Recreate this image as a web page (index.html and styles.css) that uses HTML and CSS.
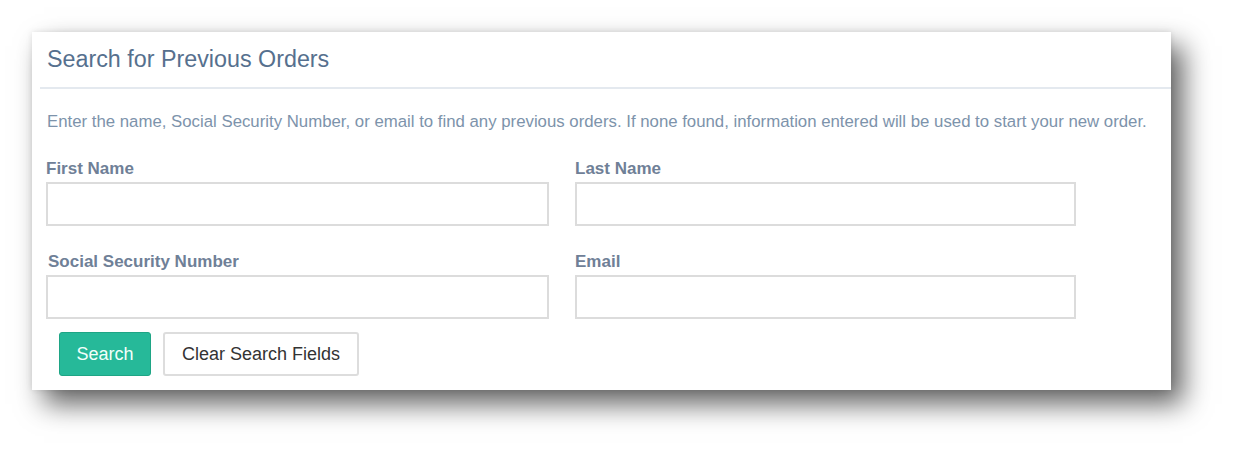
FILE: index.html
```html
<!DOCTYPE html>
<html lang="en">
<head>
  <meta charset="UTF-8">
  <title>Search for Previous Orders</title>
  <link rel="stylesheet" href="styles.css">
</head>
<body>
  <div class="panel">
    <div class="panel-header">
      <h2 class="panel-title">Search for Previous Orders</h2>
    </div>
    <div class="panel-body">
      <p class="hint">Enter the name, Social Security Number, or email to find any previous orders. If none found, information entered will be used to start your new order.</p>
      <div class="fields">
        <div class="field">
          <label for="first-name">First Name</label>
          <input type="text" id="first-name">
        </div>
        <div class="field">
          <label for="last-name">Last Name</label>
          <input type="text" id="last-name">
        </div>
        <div class="field">
          <label for="ssn" class="ssn-label">Social Security Number</label>
          <input type="text" id="ssn">
        </div>
        <div class="field">
          <label for="email">Email</label>
          <input type="text" id="email">
        </div>
      </div>
      <div class="actions">
        <button class="btn btn-search">Search</button>
        <button class="btn btn-clear">Clear Search Fields</button>
      </div>
    </div>
  </div>
</body>
</html>
```
FILE: styles.css
```css
html {
  background-color: #fff;
}
body {
  margin: 0;
  padding: 32px 0 65px 32px;
  background-color: #fff;
  font-family: 'Liberation Sans', Arial, sans-serif;
}
.panel {
  width: 1139px;
  height: 358px;
  box-sizing: border-box;
  background-color: #fff;
  box-shadow: 12px 14px 26px rgba(0, 0, 0, 0.62), 0 0 6px rgba(0, 0, 0, 0.1);
}
.panel-header {
  height: 55px;
  margin-left: 8px;
  padding-left: 7px;
  border-bottom: 2px solid #e4e9ef;
  display: flex;
  align-items: center;
}
.panel-title {
  margin: 0;
  font-size: 23.3px;
  font-weight: normal;
  color: #56708e;
}
.panel-body {
  padding: 23px 14px 0 14px;
}
.hint {
  margin: 0 0 27px 1px;
  font-size: 16.8px;
  line-height: 20px;
  color: #7d93ab;
}
.fields {
  display: grid;
  grid-template-columns: 503px 501px;
  column-gap: 26px;
  row-gap: 26px;
}
.field {
  display: flex;
  flex-direction: column;
  gap: 3px;
}
.field label {
  font-size: 17px;
  font-weight: bold;
  line-height: 20px;
  color: #6f8097;
}
.ssn-label {
  margin-left: 2px;
}
.field input {
  height: 44px;
  box-sizing: border-box;
  border: 2px solid #dcdcdc;
  background-color: #fff;
  padding: 0 10px;
  font-size: 16px;
}
.actions {
  display: flex;
  gap: 12px;
  margin: 13px 0 0 13px;
}
.btn {
  height: 44px;
  box-sizing: border-box;
  border-radius: 3px;
  font-family: 'Liberation Sans', Arial, sans-serif;
  font-size: 18px;
  cursor: pointer;
}
.btn-search {
  width: 92px;
  background-color: #26b999;
  border: 1px solid #1ea585;
  color: #f2fffb;
}
.btn-clear {
  width: 196px;
  background-color: #fff;
  border: 2px solid #dddddd;
  color: #333;
}
```
